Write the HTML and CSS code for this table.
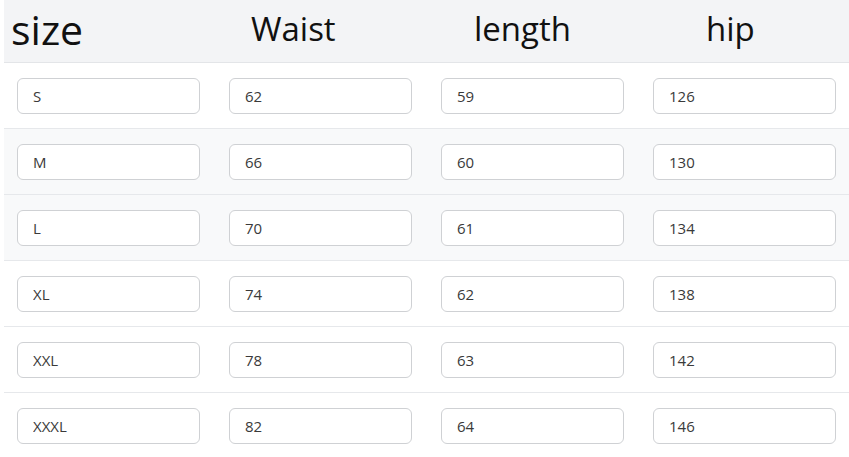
FILE: index.html
```html
<!DOCTYPE html>
<html lang="en">
<head>
<meta charset="utf-8">
<title>Size chart</title>
<link rel="stylesheet" href="styles.css">
</head>
<body>
<div class="chart">
  <div class="row head">
    <div class="hcell h-size">size</div>
    <div class="hcell h-waist">Waist</div>
    <div class="hcell h-length">length</div>
    <div class="hcell h-hip">hip</div>
  </div>
  <div class="row"><div class="cell"><input class="field" value="S" readonly></div><div class="cell"><input class="field" value="62" readonly></div><div class="cell"><input class="field" value="59" readonly></div><div class="cell"><input class="field" value="126" readonly></div></div>
  <div class="row shade"><div class="cell"><input class="field" value="M" readonly></div><div class="cell"><input class="field" value="66" readonly></div><div class="cell"><input class="field" value="60" readonly></div><div class="cell"><input class="field" value="130" readonly></div></div>
  <div class="row shade"><div class="cell"><input class="field" value="L" readonly></div><div class="cell"><input class="field" value="70" readonly></div><div class="cell"><input class="field" value="61" readonly></div><div class="cell"><input class="field" value="134" readonly></div></div>
  <div class="row"><div class="cell"><input class="field" value="XL" readonly></div><div class="cell"><input class="field" value="74" readonly></div><div class="cell"><input class="field" value="62" readonly></div><div class="cell"><input class="field" value="138" readonly></div></div>
  <div class="row"><div class="cell"><input class="field" value="XXL" readonly></div><div class="cell"><input class="field" value="78" readonly></div><div class="cell"><input class="field" value="63" readonly></div><div class="cell"><input class="field" value="142" readonly></div></div>
  <div class="row last"><div class="cell"><input class="field" value="XXXL" readonly></div><div class="cell"><input class="field" value="82" readonly></div><div class="cell"><input class="field" value="64" readonly></div><div class="cell"><input class="field" value="146" readonly></div></div>
</div>
</body>
</html>
```

FILE: styles.css
```css
html, body {
  margin: 0;
  padding: 0;
  background: #ffffff;
  overflow: hidden;
}
body {
  font-family: "Open Sans", "Noto Sans", sans-serif;
  color: #111;
}
.chart {
  padding-left: 4px;
  width: 848px;
}
.row {
  display: grid;
  grid-template-columns: 212px 212px 212px 212px;
  height: 65px;
  border-bottom: 1px solid #e6e8eb;
  align-items: center;
}
.row.shade {
  background: #f8f9fa;
}
.row.last {
  border-bottom: none;
}
.row.head {
  height: 62px;
  background: #f3f4f6;
  border-bottom: 1px solid #e3e5e8;
  align-items: start;
}
.hcell {
  font-size: 33px;
  line-height: 1;
  color: #111;
  padding-top: 12px;
}
.h-size {
  font-size: 41px;
  padding-left: 7px;
  padding-top: 9px;
}
.h-waist { padding-left: 35px; }
.h-length { padding-left: 46px; }
.h-hip { padding-left: 66px; }
.cell {
  padding-left: 13px;
}
.field {
  display: block;
  box-sizing: border-box;
  width: 183px;
  height: 36px;
  margin: 0;
  border: 1px solid #cfd1d4;
  border-radius: 6px;
  background: #ffffff;
  padding: 0 0 0 15px;
  font-family: "Open Sans", "Noto Sans", sans-serif;
  font-size: 15px;
  color: #3a3a3a;
  outline: none;
}
```
